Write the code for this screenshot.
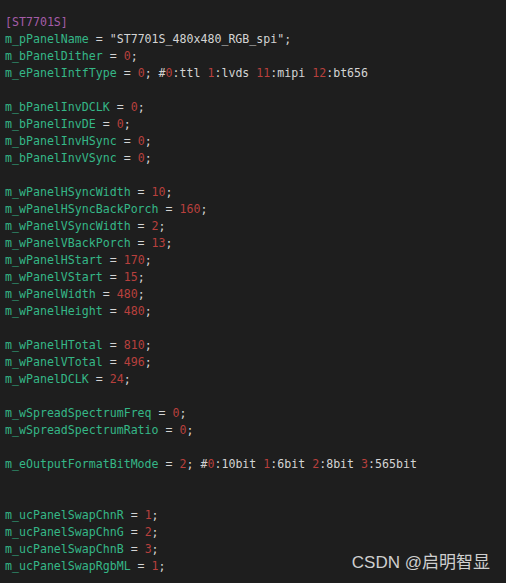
type Tok = [string, string];

const K = 'text-[#35b787]';
const N = 'text-[#b8403d]';
const P = 'text-[#d4d4d4]';
const S = 'text-[#d4d4d4]';

const kv = (key: string, val: string, tail: Tok[] = []): Tok[] => [
  [K, key],
  [P, ' = '],
  [N, val],
  [P, ';'],
  ...tail,
];

const lines: Tok[][] = [
  [['text-[#a55ca8]', '[ST7701S]']],
  [[K, 'm_pPanelName'], [P, ' = '], [S, '"ST7701S_480x480_RGB_spi"'], [P, ';']],
  kv('m_bPanelDither', '0'),
  kv('m_ePanelIntfType', '0', [
    [P, ' #'], [N, '0'], [P, ':ttl '], [N, '1'], [P, ':lvds '], [N, '11'], [P, ':mipi '], [N, '12'], [P, ':bt656'],
  ]),
  [],
  kv('m_bPanelInvDCLK', '0'),
  kv('m_bPanelInvDE', '0'),
  kv('m_bPanelInvHSync', '0'),
  kv('m_bPanelInvVSync', '0'),
  [],
  kv('m_wPanelHSyncWidth', '10'),
  kv('m_wPanelHSyncBackPorch', '160'),
  kv('m_wPanelVSyncWidth', '2'),
  kv('m_wPanelVBackPorch', '13'),
  kv('m_wPanelHStart', '170'),
  kv('m_wPanelVStart', '15'),
  kv('m_wPanelWidth', '480'),
  kv('m_wPanelHeight', '480'),
  [],
  kv('m_wPanelHTotal', '810'),
  kv('m_wPanelVTotal', '496'),
  kv('m_wPanelDCLK', '24'),
  [],
  kv('m_wSpreadSpectrumFreq', '0'),
  kv('m_wSpreadSpectrumRatio', '0'),
  [],
  kv('m_eOutputFormatBitMode', '2', [
    [P, ' #'], [N, '0'], [P, ':10bit '], [N, '1'], [P, ':6bit '], [N, '2'], [P, ':8bit '], [N, '3'], [P, ':565bit'],
  ]),
  [],
  [],
  kv('m_ucPanelSwapChnR', '1'),
  kv('m_ucPanelSwapChnG', '2'),
  kv('m_ucPanelSwapChnB', '3'),
  kv('m_ucPanelSwapRgbML', '1'),
];

export default function App() {
  return (
    <div className="w-[506px] h-[583px] bg-[#1e1e1e] overflow-hidden relative">
      {/* code lines */}
      <pre className="pt-[14px] pl-[5px] font-['DejaVu_Sans_Mono',monospace] text-[11.6px] leading-[17px] whitespace-pre">
        {lines.map((line, i) => (
          <div key={i} className="h-[17px]">
            {line.map(([cls, text], j) => (
              <span key={j} className={cls}>{text}</span>
            ))}
          </div>
        ))}
      </pre>

      {/* watermark */}
      <div className="absolute right-[16px] bottom-[8px] text-[17px] text-[#cfcfcf] font-['Liberation_Sans','Noto_Sans_CJK_SC',sans-serif]">
        CSDN @启明智显
      </div>
    </div>
  );
}
